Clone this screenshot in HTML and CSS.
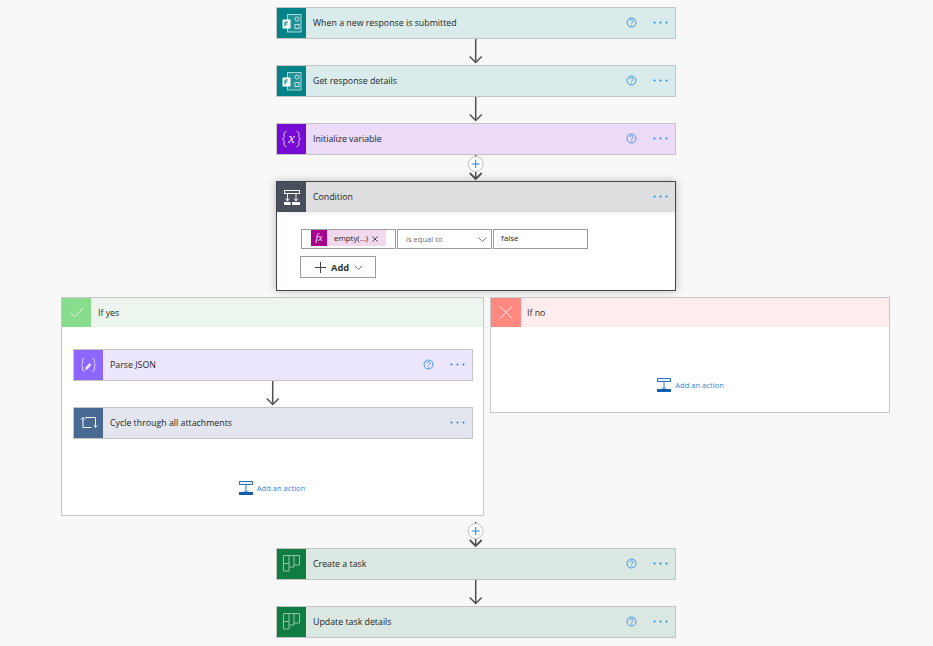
FILE: index.html
```html
<!DOCTYPE html>
<html lang="en">
<head>
<meta charset="utf-8">
<title>Flow</title>
<link rel="stylesheet" href="styles.css">
</head>
<body>
<svg class="defs" aria-hidden="true">
  <symbol id="forms" viewBox="0 0 29 30">
    <rect x="10.5" y="6.5" width="13.5" height="17.5" fill="#ffffff" fill-opacity=".12" stroke="#a9d6d6"/>
    <circle cx="20" cy="11" r="2" fill="none" stroke="#bfe0e0"/>
    <rect x="18" y="16.5" width="4" height="4" fill="none" stroke="#bfe0e0"/>
    <rect x="5.5" y="11.5" width="8" height="9" fill="#ffffff"/>
    <path d="M8 14v4.5M8 14h3M8 16h2.4" stroke="#038387" fill="none"/>
  </symbol>
  <symbol id="variable" viewBox="0 0 29 30">
    <path d="M9.5 7.500c-2 0-2.400 1-2.400 2.500v2.500c0 1.300-.6 2.200-1.800 2.500 1.200.3 1.800 1.200 1.800 2.500V20c0 1.500.4 2.500 2.400 2.500M19.500 7.500c2 0 2.400 1 2.400 2.500v2.500c0 1.300.6 2.200 1.800 2.500-1.200.3-1.800 1.200-1.800 2.500V20c0 1.500-.4 2.500-2.400 2.500" fill="none" stroke="#e9d7fa" stroke-width=".9"/>
    <text class="var-x" x="14.500" y="18.500" text-anchor="middle">x</text>
  </symbol>
  <symbol id="condition" viewBox="0 0 29 30">
    <rect x="7.500" y="8.500" width="15" height="3" fill="none" stroke="#ffffff"/>
    <path d="M10.500 12v7M19 12v7M8.500 16.500l2 2.500 2-2.500M17 16.500l2 2.500 2-2.500" fill="none" stroke="#ffffff" stroke-width=".9"/>
    <path d="M7 20h6.500v3H7zM15 20h8v3h-8z" fill="#ffffff"/>
  </symbol>
  <symbol id="parse" viewBox="0 0 29 30">
    <path d="M10.500 8.500c-1.500 0-1.900.7-1.900 2v2.300c0 1-.5 1.700-1.500 2 1 .3 1.500 1 1.500 2v2.300c0 1.300.4 2 1.900 2M18.500 8.500c1.500 0 1.900.7 1.900 2v2.300c0 1 .5 1.700 1.500 2-1 .3-1.500 1-1.500 2v2.300c0 1.300-.4 2-1.900 2" fill="none" stroke="#e7deff"/>
    <path d="M11.500 17.500l4-4.500 2 1.800-4 4.500-2.500.6z" fill="#ece6ff"/>
  </symbol>
  <symbol id="loop" viewBox="0 0 29 30">
    <path d="M11 9.500h10.500V19M17.500 19.500H9V10" fill="none" stroke="#ffffff"/>
    <path d="M7 11.500l2-2 2 2M19.500 17.500l2 2 2-2" fill="none" stroke="#ffffff"/>
  </symbol>
  <symbol id="planner" viewBox="0 0 29 30">
    <path d="M6.500 6.500h5.500v15.500H6.500zM6.500 14.500h5.500M12 6.500h5v11.500h-5M17 6.500h5.500v9.500H17" fill="none" stroke="#8fc4a7"/>
  </symbol>
  <symbol id="help" viewBox="0 0 11 11">
    <circle cx="5.500" cy="5.500" r="4.500" fill="none" stroke="#3f94f5"/>
    <path d="M3.900 4.300c0-2.100 3.300-2.100 3.300-.1 0 1.200-1.600 1.200-1.600 2.600M5.600 7.600v1" fill="none" stroke="#3f94f5" stroke-width=".9"/>
  </symbol>
  <symbol id="dots" viewBox="0 0 15 3">
    <circle cx="1.500" cy="1.500" r="1" fill="#1683e6"/>
    <circle cx="7.500" cy="1.500" r="1" fill="#1683e6"/>
    <circle cx="13.500" cy="1.500" r="1" fill="#1683e6"/>
  </symbol>
  <symbol id="arrow" viewBox="0 0 14 26">
    <path d="M6.700 0v23" stroke="#505050" stroke-width="1.500" fill="none"/>
    <path d="M.7 17.500l6 6 6-6" stroke="#505050" stroke-width="1.500" fill="none"/>
  </symbol>
  <symbol id="plus-arrow" viewBox="0 0 20 26">
    <path d="M9.700 0v5M9.700 17v7" stroke="#505050" stroke-width="1.500" fill="none"/>
    <path d="M3.700 18l6 6 6-6" stroke="#505050" stroke-width="1.800" fill="none"/>
    <circle cx="9.700" cy="9" r="7.500" fill="#ffffff" stroke="#c2c2c2"/>
    <path d="M9.700 5v8M5.700 9h8" stroke="#1f86d8" fill="none"/>
  </symbol>
  <symbol id="add-action" viewBox="0 0 14 15">
    <rect x=".5" y=".5" width="13" height="3" fill="#eaf2fa" stroke="#2f74bd"/>
    <path d="M7 4v7.500M5 9.500l2 2 2-2" fill="none" stroke="#2f74bd"/>
    <rect x="0" y="11" width="14" height="3" fill="#0f5fae"/>
  </symbol>
</svg>

<main class="flow">
  <div class="trunk">
    <article class="card forms">
      <span class="tile"><svg class="tile-icon"><use href="#forms"/></svg></span>
      <span class="title">When a new response is submitted</span>
      <svg class="help"><use href="#help"/></svg>
      <svg class="dots"><use href="#dots"/></svg>
    </article>
    <svg class="arrow"><use href="#arrow"/></svg>
    <article class="card forms">
      <span class="tile"><svg class="tile-icon"><use href="#forms"/></svg></span>
      <span class="title">Get response details</span>
      <svg class="help"><use href="#help"/></svg>
      <svg class="dots"><use href="#dots"/></svg>
    </article>
    <svg class="arrow"><use href="#arrow"/></svg>
    <article class="card variable">
      <span class="tile"><svg class="tile-icon"><use href="#variable"/></svg></span>
      <span class="title">Initialize variable</span>
      <svg class="help"><use href="#help"/></svg>
      <svg class="dots"><use href="#dots"/></svg>
    </article>
    <svg class="plus-arrow"><use href="#plus-arrow"/></svg>

    <section class="condition">
      <header class="card-head">
        <span class="tile"><svg class="tile-icon"><use href="#condition"/></svg></span>
        <span class="title">Condition</span>
        <svg class="dots"><use href="#dots"/></svg>
      </header>
      <div class="cond-body">
        <div class="cond-row">
          <div class="field token-field">
            <span class="token">
              <span class="fx">fx</span>
              <span class="token-text">empty(...)</span>
              <svg class="token-x" viewBox="0 0 7 7"><path d="M.5.5l6 6M6.500.5l-6 6" stroke="#333" fill="none"/></svg>
            </span>
          </div>
          <div class="field select-field">
            <span>is equal to</span>
            <svg class="chev" viewBox="0 0 9 5"><path d="M.5.5l4 4 4-4" stroke="#8a8a8a" fill="none"/></svg>
          </div>
          <div class="field value-field">false</div>
        </div>
        <button class="add-btn" type="button">
          <svg class="add-plus" viewBox="0 0 11 11"><path d="M5.500 0v11M0 5.500h11" stroke="#444" fill="none"/></svg>
          <span>Add</span>
          <svg class="chev" viewBox="0 0 9 5"><path d="M.5.5l4 4 4-4" stroke="#777" fill="none"/></svg>
        </button>
      </div>
    </section>
  </div>

  <div class="branches">
    <section class="branch yes">
      <header class="branch-head">
        <span class="branch-tile">
          <svg class="branch-icon" viewBox="0 0 16 12"><path d="M.8 6.500l4.500 4.500L15 1" stroke="#fff" fill="none"/></svg>
        </span>
        <span class="title">If yes</span>
      </header>
      <div class="branch-body">
        <article class="card parse">
          <span class="tile"><svg class="tile-icon"><use href="#parse"/></svg></span>
          <span class="title">Parse JSON</span>
          <svg class="help"><use href="#help"/></svg>
          <svg class="dots"><use href="#dots"/></svg>
        </article>
        <svg class="arrow"><use href="#arrow"/></svg>
        <article class="card loop">
          <span class="tile"><svg class="tile-icon"><use href="#loop"/></svg></span>
          <span class="title">Cycle through all attachments</span>
          <svg class="dots"><use href="#dots"/></svg>
        </article>
        <a class="add-action yes-action"><svg class="add-icon"><use href="#add-action"/></svg><span>Add an action</span></a>
      </div>
    </section>
    <section class="branch no">
      <header class="branch-head">
        <span class="branch-tile">
          <svg class="branch-icon" viewBox="0 0 13 13"><path d="M.5.500l12 12M12.500.500l-12 12" stroke="#ffe9e7" fill="none"/></svg>
        </span>
        <span class="title">If no</span>
      </header>
      <div class="branch-body no-body">
        <a class="add-action"><svg class="add-icon"><use href="#add-action"/></svg><span>Add an action</span></a>
      </div>
    </section>
  </div>

  <div class="trunk">
    <svg class="plus-arrow after-branch"><use href="#plus-arrow"/></svg>
    <article class="card planner">
      <span class="tile"><svg class="tile-icon"><use href="#planner"/></svg></span>
      <span class="title">Create a task</span>
      <svg class="help"><use href="#help"/></svg>
      <svg class="dots"><use href="#dots"/></svg>
    </article>
    <svg class="arrow"><use href="#arrow"/></svg>
    <article class="card planner">
      <span class="tile"><svg class="tile-icon"><use href="#planner"/></svg></span>
      <span class="title">Update task details</span>
      <svg class="help"><use href="#help"/></svg>
      <svg class="dots"><use href="#dots"/></svg>
    </article>
  </div>
</main>
</body>
</html>
```

FILE: styles.css
```css
* { box-sizing: border-box; }

html, body {
  margin: 0;
  height: 646px;
  overflow: hidden;
  background: #f8f8f8;
}

body {
  font-family: "Open Sans", "Noto Sans", sans-serif;
  font-size: 8.8px;
  color: #1f1f1f;
}

.defs { display: none; }

.flow {
  width: 829px;
  margin-left: 61px;
  padding-top: 7px;
  display: flex;
  flex-direction: column;
}

.trunk {
  width: 400px;
  margin-left: 215px;
  display: flex;
  flex-direction: column;
  align-items: center;
}

.card {
  width: 400px;
  height: 32px;
  flex: none;
  display: flex;
  align-items: center;
  border: 1px solid #c4c4c4;
}

.tile {
  width: 29px;
  height: 100%;
  flex: none;
  display: block;
  margin-right: 7px;
}

.tile-icon {
  display: block;
  width: 29px;
  height: 30px;
}

.title {
  flex: 1;
  white-space: nowrap;
  margin-bottom: 1px;
}

.card-head .title,
.branch-head .title { margin-bottom: 0; }

.help {
  width: 11px;
  height: 11px;
  flex: none;
  margin-right: 16px;
  margin-bottom: 1px;
}

.dots {
  width: 15px;
  height: 3px;
  flex: none;
  margin-right: 7px;
  margin-bottom: 1px;
}

.forms { background: #d9eceb; }
.forms .tile { background: #038387; }
.variable { background: #ebdaf8; }
.variable .tile { background: #770bd6; }
.parse { background: #ece7fe; }
.parse .tile { background: #8c66ff; }
.loop { background: #e3e6ee; }
.loop .tile { background: #486991; }
.planner { background: #dbe8e2; }
.planner .tile { background: #107c41; }

.arrow {
  display: block;
  width: 14px;
  height: 26px;
  flex: none;
}

.plus-arrow {
  display: block;
  width: 20px;
  height: 26px;
  flex: none;
}

.after-branch {
  height: 32px;
  padding-top: 6px;
}

.var-x {
  font-family: "Liberation Serif", serif;
  font-style: italic;
  font-size: 15px;
  fill: #f0e4fb;
}

.condition {
  width: 400px;
  height: 110px;
  flex: none;
  background: #ffffff;
  border: 1px solid #3f4754;
  box-shadow: 0 0 8px rgba(0, 0, 0, .25);
}

.card-head {
  height: 30px;
  display: flex;
  align-items: center;
  background: #dcdee0;
  box-shadow: 0 2px 4px rgba(0, 0, 0, .06);
}

.card-head .tile { background: #484f5a; }

.cond-body {
  padding: 17px 0 0 23px;
}

.cond-row {
  display: flex;
  gap: 1px;
  margin-left: 1px;
}

.field {
  width: 95px;
  height: 20px;
  flex: none;
  border: 1px solid #9b9b9b;
  background: #ffffff;
}

.token-field { padding-left: 9px; }

.token {
  width: 75px;
  height: 16px;
  display: flex;
  align-items: center;
  background: #f2d9ee;
}

.fx {
  width: 16px;
  height: 16px;
  flex: none;
  background: #a6008f;
  color: #f7e3f3;
  font-family: "Liberation Serif", serif;
  font-style: italic;
  font-size: 10px;
  line-height: 16px;
  text-align: center;
}

.token-text {
  margin-left: 7px;
  font-size: 7.900px;
  margin-bottom: 1px;
  white-space: nowrap;
}

.token-x {
  width: 6px;
  height: 6px;
  margin-left: 4px;
  margin-top: 2px;
  flex: none;
}

.select-field {
  display: flex;
  align-items: center;
  justify-content: space-between;
  padding: 0 4px 0 8px;
  color: #6f6f6f;
  font-size: 7.600px;
}

.select-field .chev { width: 9px; height: 5px; margin-top: 1px; }

.value-field {
  padding-left: 7px;
  font-size: 8px;
  line-height: 16px;
}

.add-btn {
  width: 76px;
  height: 22px;
  margin-top: 7px;
  display: flex;
  align-items: center;
  padding: 0 0 0 14px;
  background: #ffffff;
  border: 1px solid #9b9b9b;
  font: 700 9.300px "Open Sans", "Noto Sans", sans-serif;
  color: #333333;
}

.add-plus { width: 11px; height: 11px; flex: none; margin-right: 5px; }
.add-btn .chev { width: 9px; height: 5px; margin-left: 5px; }

.branches {
  display: flex;
  align-items: flex-start;
  gap: 6px;
  margin-top: 6px;
}

.branch {
  flex: none;
  background: #ffffff;
  border: 1px solid #c8c8c8;
}

.yes { width: 423px; height: 219px; }
.no { width: 400px; height: 116px; }

.branch-head {
  height: 29px;
  display: flex;
  align-items: center;
}

.yes .branch-head { background: #ecf6ee; }
.no .branch-head { background: #ffecec; }

.branch-tile {
  width: 29px;
  height: 100%;
  flex: none;
  margin-right: 7px;
  display: flex;
  align-items: center;
  justify-content: center;
}

.yes .branch-tile { background: #88dd8c; }
.no .branch-tile { width: 30px; background: #ff8880; margin-right: 6px; }

.branch-icon { width: 14px; height: 13px; }

.branch-body {
  padding: 22px 10px 0 11px;
  display: flex;
  flex-direction: column;
  align-items: center;
}

.no-body { padding-top: 51px; }

.add-action {
  display: flex;
  align-items: center;
  height: 15px;
  color: #2f86d6;
  font-size: 7.600px;
  white-space: nowrap;
}

.add-action span { margin-bottom: 2px; }

.yes-action { margin: 42px 2px 0 0; }

.add-icon {
  width: 14px;
  height: 15px;
  margin-right: 4px;
  flex: none;
}
```
